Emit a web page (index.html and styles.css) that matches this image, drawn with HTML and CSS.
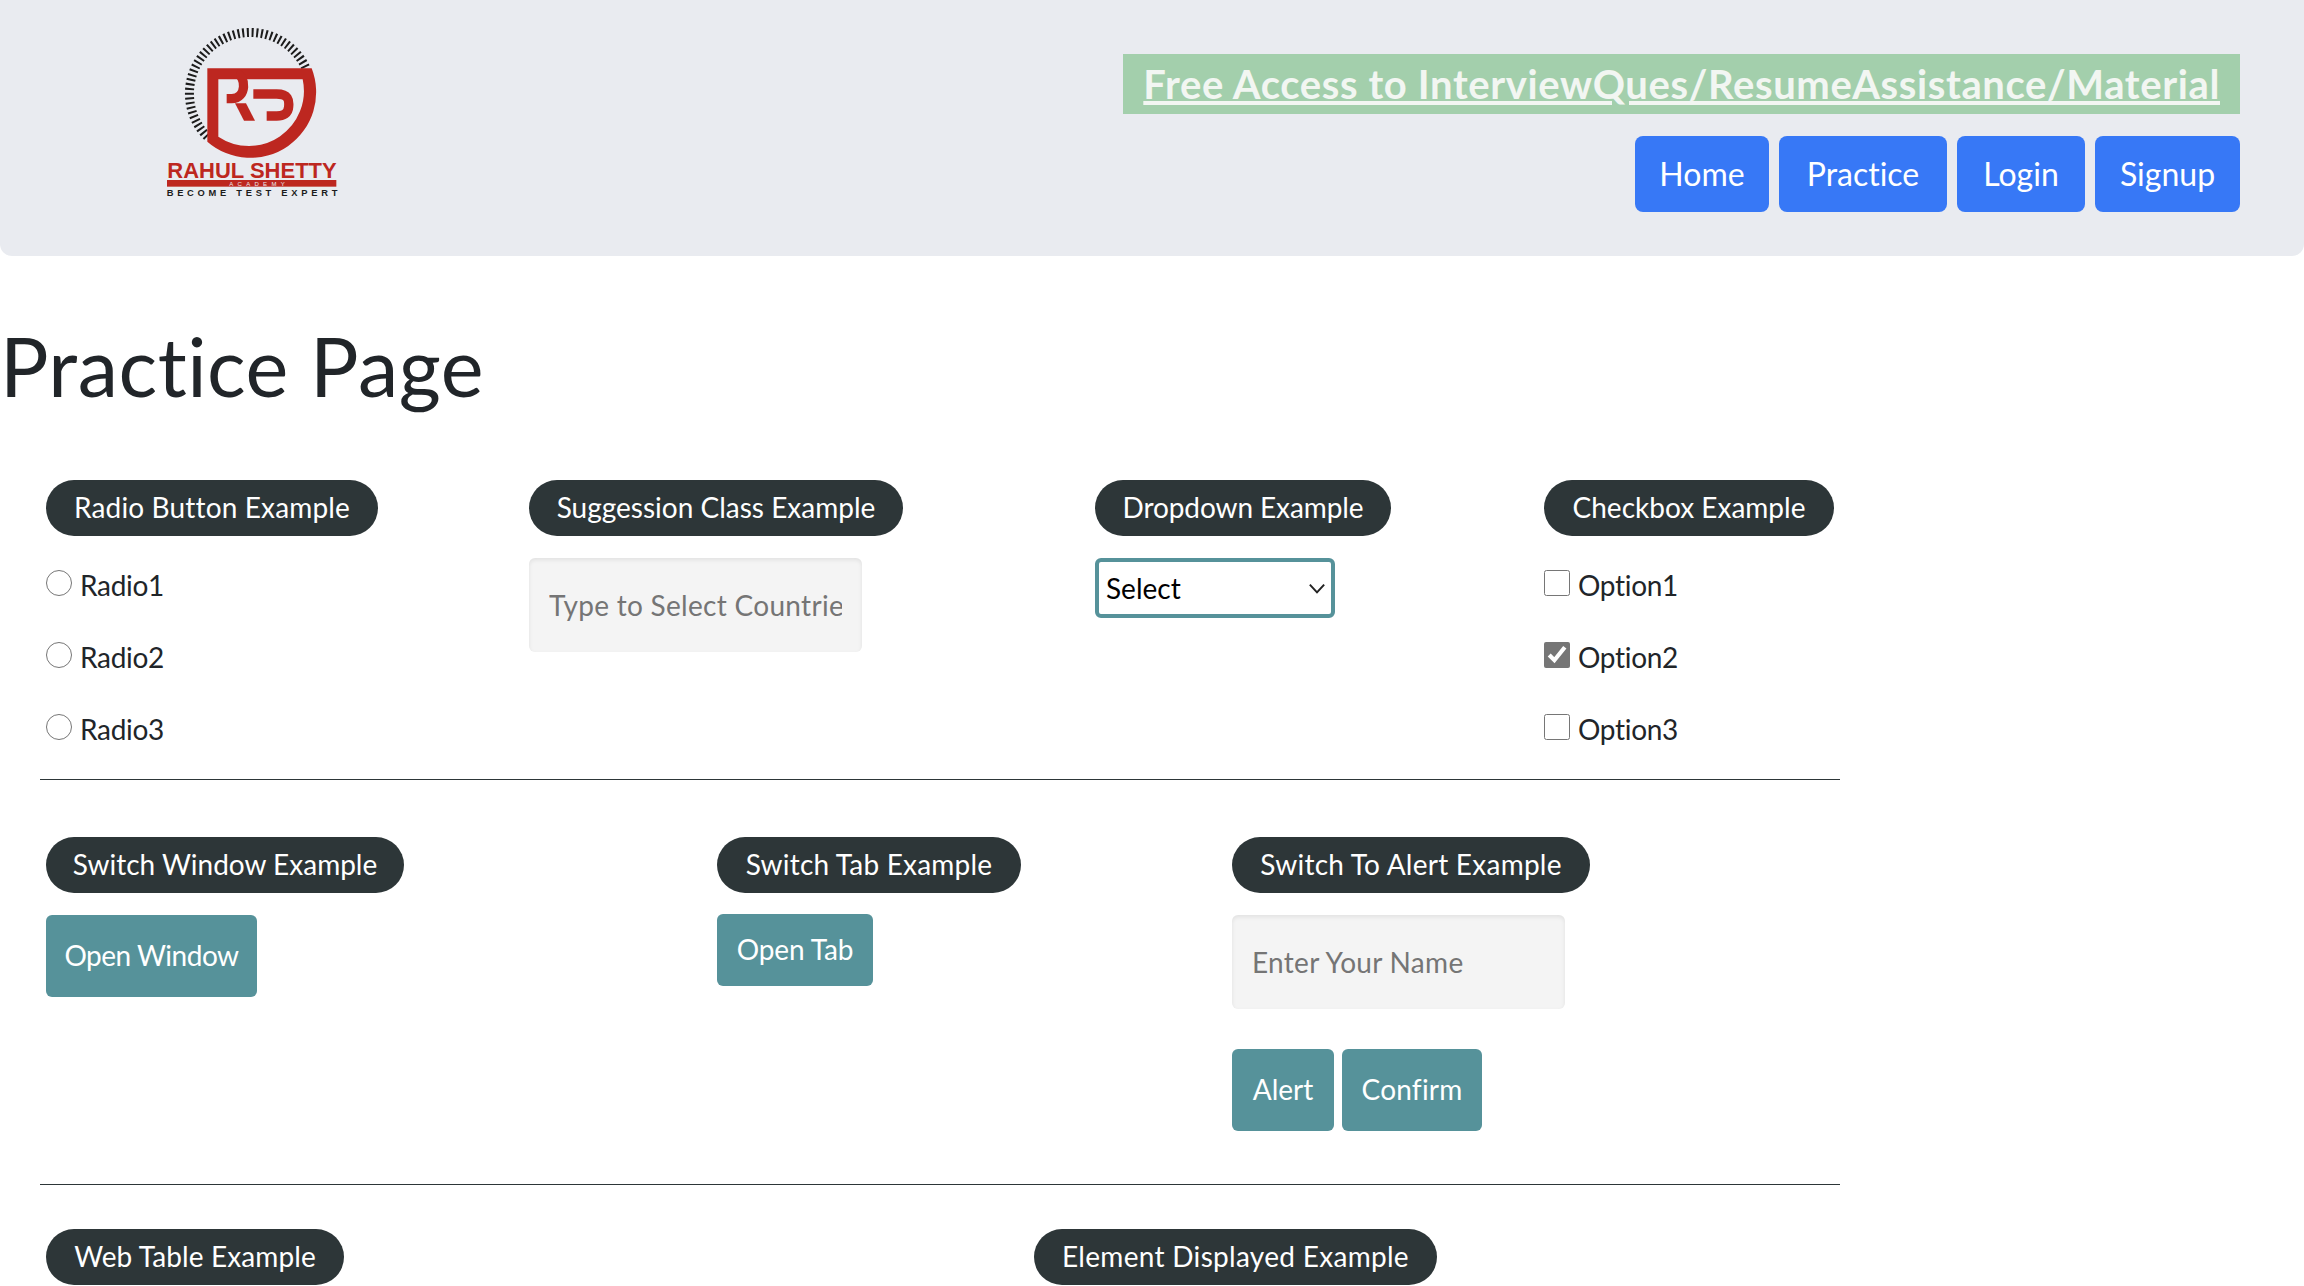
FILE: index.html
```html
<!DOCTYPE html>
<html lang="en">
<head>
<meta charset="utf-8">
<title>Practice Page</title>
<link rel="stylesheet" href="styles.css">
</head>
<body>
<header class="site-header">
  <svg class="logo" viewBox="0 0 780 660" role="img" aria-label="Rahul Shetty Academy logo">
    <path class="logo-ring" d="M262 410A183 183 0 1 1 558 205"/>
    <path class="logo-red" fill-rule="evenodd" d="M262 205H575A197 197 0 0 1 262 425ZM295 238V410A165 165 0 0 0 548 238Z"/>
    <path class="logo-stroke" d="M350 222C378 226 382 296 335 296H320"/>
    <path class="logo-stroke" d="M400 282H470C505 282 508 300 506 320C505 340 490 348 470 348H440"/>
    <polygon class="logo-fill" points="345,310 378,310 405,362 372,362"/>
    <text class="logo-name" x="142" y="533" textLength="508" lengthAdjust="spacingAndGlyphs">RAHUL SHETTY</text>
    <rect class="logo-fill" x="141" y="540" width="508" height="20"/>
    <text class="logo-academy" x="328" y="558" textLength="166">ACADEMY</text>
    <text class="logo-tag" x="140" y="589" textLength="512">BECOME TEST EXPERT</text>
  </svg>
  <div class="header-right">
    <div class="promo"><a href="#">Free Access to InterviewQues/ResumeAssistance/Material</a></div>
    <nav class="nav">
      <a class="nav-btn" href="#">Home</a>
      <a class="nav-btn" href="#">Practice</a>
      <a class="nav-btn" href="#">Login</a>
      <a class="nav-btn" href="#">Signup</a>
    </nav>
  </div>
</header>
<h1 class="title">Practice Page</h1>
<main class="content">
  <section class="row row-one">
    <div class="cell">
      <h2 class="pill pill-radio">Radio Button Example</h2>
      <label class="opt"><input type="radio" name="r"><span>Radio1</span></label>
      <label class="opt"><input type="radio" name="r"><span>Radio2</span></label>
      <label class="opt"><input type="radio" name="r"><span>Radio3</span></label>
    </div>
    <div class="cell">
      <h2 class="pill pill-suggest">Suggession Class Example</h2>
      <input class="field" type="text" placeholder="Type to Select Countries">
    </div>
    <div class="cell">
      <h2 class="pill pill-drop">Dropdown Example</h2>
      <div class="select-wrap">
        <select class="select"><option>Select</option></select>
        <svg class="chevron" viewBox="0 0 16 10"><path d="M1.5 1.5 8 8.5 14.5 1.5"/></svg>
      </div>
    </div>
    <div class="cell">
      <h2 class="pill pill-check">Checkbox Example</h2>
      <label class="opt"><input type="checkbox"><span>Option1</span></label>
      <label class="opt"><input type="checkbox" checked><span>Option2</span></label>
      <label class="opt"><input type="checkbox"><span>Option3</span></label>
    </div>
  </section>
  <hr class="rule">
  <section class="row row-two">
    <div class="cell">
      <h2 class="pill pill-window">Switch Window Example</h2>
      <button class="btn btn-window">Open Window</button>
    </div>
    <div class="cell">
      <h2 class="pill pill-tab">Switch Tab Example</h2>
      <button class="btn btn-tab">Open Tab</button>
    </div>
    <div class="cell">
      <h2 class="pill pill-alert">Switch To Alert Example</h2>
      <input class="field" type="text" placeholder="Enter Your Name">
      <div class="btn-row">
        <button class="btn btn-alert">Alert</button>
        <button class="btn btn-confirm">Confirm</button>
      </div>
    </div>
  </section>
  <hr class="rule">
  <section class="row row-three">
    <div class="cell"><h2 class="pill pill-table">Web Table Example</h2></div>
    <div class="cell"><h2 class="pill pill-element">Element Displayed Example</h2></div>
  </section>
</main>
</body>
</html>
```
FILE: styles.css
```css
* { box-sizing: border-box; }
html, body { height: 1286px; overflow: hidden; }
body { margin: 0; background: #fff; color: #212529; font-family: "Lato", "Open Sans", sans-serif; font-size: 28px; font-variant-ligatures: none; }

.site-header { display: flex; justify-content: space-between; height: 256px; background: #e9ebf0; border-radius: 0 0 12px 12px; padding-left: 120px; }
.logo { display: block; width: 260px; height: 220px; }
.logo-ring { fill: none; stroke: #1c1c1c; stroke-width: 27; stroke-dasharray: 6 8; }
.logo-red, .logo-fill { fill: #bd2720; }
.logo-stroke { fill: none; stroke: #bd2720; stroke-width: 28; }
.logo-name { fill: #bd2720; font: 700 66px "Liberation Sans", sans-serif; }
.logo-academy { fill: #e9ebf0; font: 400 18px "Liberation Sans", sans-serif; }
.logo-tag { fill: #1c1c1c; font: 700 28px "Liberation Sans", sans-serif; }

.header-right { display: flex; flex-direction: column; align-items: flex-end; padding: 54px 64px 0 0; }
.promo { background: #a3cfac; height: 60px; padding: 0 20px; display: flex; align-items: center; font-size: 40px; font-weight: 700; letter-spacing: .62px; white-space: nowrap; }
.promo a { color: #f2f6f2; text-decoration: underline; }
.nav { display: grid; grid-template-columns: 134px 168px 128px 145px; gap: 10px; margin-top: 22px; }
.nav-btn { display: flex; align-items: center; justify-content: center; height: 76px; padding-bottom: 2px; background: #3778f6; color: #fff; border-radius: 8px; text-decoration: none; font-size: 32px; }

.title { margin: 0; height: 224px; padding-top: 62px; font-size: 81px; font-weight: 400; line-height: 96px; letter-spacing: .5px; color: #212529; }

.content { width: 1800px; margin-left: 40px; }
.row { display: grid; }
.row-one { grid-template-columns: 483px 566px 449px 1fr; padding-bottom: 27px; }
.row-two { grid-template-columns: 671px 515px 1fr; padding: 57px 0 53px; }
.row-three { grid-template-columns: 988px 1fr; padding-top: 44px; }
.cell { padding-left: 6px; display: flex; flex-direction: column; align-items: flex-start; }

.pill { margin: 0 0 22px; height: 56px; padding-bottom: 2px; display: flex; align-items: center; justify-content: center; background: #2d3638; color: #fff; border-radius: 28px; font-size: 28px; font-weight: 400; white-space: nowrap; }
.pill-radio { width: 332px; letter-spacing: .15px; }
.pill-suggest { width: 374px; }
.pill-drop { width: 296px; letter-spacing: -.1px; }
.pill-check { width: 290px; }
.pill-window { width: 358px; }
.pill-tab { width: 304px; letter-spacing: .2px; }
.pill-alert { width: 358px; letter-spacing: .25px; }
.pill-table { width: 298px; letter-spacing: .1px; }
.pill-element { width: 403px; letter-spacing: .3px; }

.opt { display: flex; align-items: center; height: 50px; margin-bottom: 22px; color: #212529; letter-spacing: -.3px; }
.opt:last-child { margin-bottom: 0; }
.opt input { width: 26px; height: 26px; margin: 0 8px 0 0; accent-color: #767676; }
.opt span { position: relative; top: 2px; }

.field { width: 333px; height: 94px; padding: 0 20px; border: 0; border-radius: 6px; background: #f4f4f4; box-shadow: inset 0 2px 4px rgba(0,0,0,.08); font: inherit; letter-spacing: .3px; color: #212529; }
.field::placeholder { color: #757575; opacity: 1; }

.select-wrap { position: relative; width: 240px; height: 60px; }
.select { appearance: none; width: 100%; height: 100%; padding: 0 0 0 7px; border: 4px solid #56929a; border-radius: 6px; background: #fff; font: inherit; color: #000; }
.chevron { position: absolute; right: 9px; top: 25px; width: 18px; height: 11px; fill: none; stroke: #222; stroke-width: 1.8; }

.btn { height: 82px; padding: 0 0 2px; border: 0; border-radius: 6px; background: #56929a; color: #fff; font: inherit; }
.btn-window { width: 211px; letter-spacing: -.5px; }
.btn-tab { width: 156px; height: 72px; margin-top: -1px; letter-spacing: -.1px; }
.btn-alert { width: 102px; }
.btn-confirm { width: 140px; letter-spacing: .2px; }
.btn-row { display: flex; gap: 8px; margin-top: 40px; }
.rule { margin: 0; height: 1px; border: 0; background: #2d3638; }
```
